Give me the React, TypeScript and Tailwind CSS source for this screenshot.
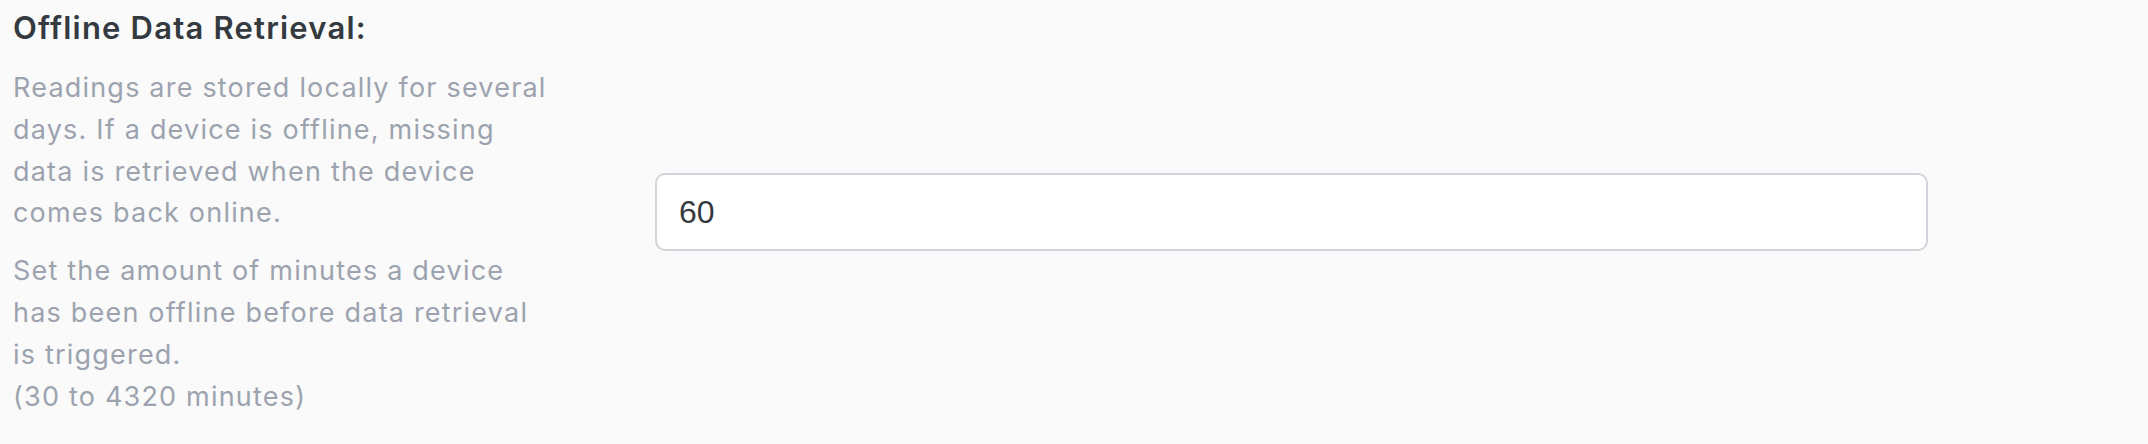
import type { FC } from "react";

const App: FC = () => {
    return (
        <div className="w-[2148px] h-[444px] bg-[#fafafa] font-['Inter',sans-serif]">
            <div className="flex items-start">
                <div className="w-[655px] pl-[13px] pt-[8px]">
                    <h3 className="text-[31px] leading-[40px] font-semibold tracking-[1.2px] text-[#343a40] whitespace-nowrap">
                        Offline Data Retrieval:
                    </h3>
                    <p className="mt-[19px] text-[27px] leading-[41.8px] tracking-[1.2px] text-[#9ca3af] whitespace-nowrap">
                        Readings are stored locally for several<br />
                        days. If a device is offline, missing<br />
                        data is retrieved when the device<br />
                        comes back online.
                    </p>
                    <p className="mt-[16px] text-[27px] leading-[41.8px] tracking-[1.2px] text-[#9ca3af] whitespace-nowrap">
                        Set the amount of minutes a device<br />
                        has been offline before data retrieval<br />
                        is triggered.<br />
                        (30 to 4320 minutes)
                    </p>
                </div>
                <div className="w-[1273px] mt-[173px]">
                    <input
                        type="text"
                        defaultValue="60"
                        className="w-full h-[78px] px-[22px] bg-white border-2 border-[#d1d5db] rounded-[10px] text-[32px] text-[#343a40] font-['Liberation_Sans',Arial,sans-serif] outline-none"
                    />
                </div>
            </div>
        </div>
    );
};

export default App;
